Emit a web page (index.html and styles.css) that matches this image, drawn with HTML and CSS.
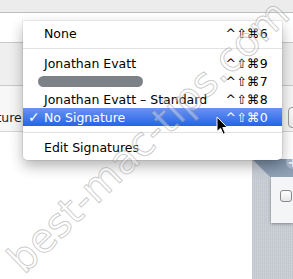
FILE: index.html
```html
<!doctype html>
<html>
  <head>
    <title>Signature menu</title>
    <link rel="stylesheet" href="styles.css">
  </head>
  <body>
    <div class="window">
      <div class="titlebar"></div>
      <div class="toolbar"></div>
      <div class="band"></div>
      <div class="form-row">
        <div class="field">
          <div class="field-label"><span>Signature:</span></div>
          <div class="field-spacer"></div>
          <div class="field-button"></div>
        </div>
      </div>
      <div class="lower">
        <div class="lower-main"></div>
        <div class="panel">
          <div class="panel-head">
            <span class="panel-add">+</span>
          </div>
          <div class="panel-body">
            <div class="card">
              <span class="checkbox"></span>
            </div>
          </div>
        </div>
      </div>
    </div>

    <div class="menu">
      <div class="item">
        <span class="check"></span>
        <span class="label">None</span>
        <span class="key">^⇧⌘6</span>
      </div>
      <div class="sep"></div>
      <div class="item">
        <span class="check"></span>
        <span class="label">Jonathan Evatt</span>
        <span class="key">^⇧⌘9</span>
      </div>
      <div class="item">
        <span class="check"></span>
        <span class="label"><span class="blurred"></span></span>
        <span class="key">^⇧⌘7</span>
      </div>
      <div class="item">
        <span class="check"></span>
        <span class="label">Jonathan Evatt – Standard</span>
        <span class="key">^⇧⌘8</span>
      </div>
      <div class="item selected">
        <span class="check">✓</span>
        <span class="label">No Signature</span>
        <span class="key">^⇧⌘0</span>
      </div>
      <div class="sep"></div>
      <div class="item">
        <span class="check"></span>
        <span class="label">Edit Signatures</span>
        <span class="key"></span>
      </div>
    </div>

    <svg class="pointer" width="13" height="20" viewBox="0 0 13 20">
      <path d="M1 1 L1 15.5 L4.5 12.3 L7.2 18.2 L9.4 17.2 L6.8 11.5 L11.3 11.5 Z"
            fill="#000" stroke="#fff" stroke-width="1" stroke-linejoin="round"/>
    </svg>

    <div class="watermark">best-mac-tips.com</div>
  </body>
</html>
```

FILE: styles.css
```css
* {
  margin: 0;
  padding: 0;
  box-sizing: border-box;
}

body {
  width: 293px;
  height: 279px;
  overflow: hidden;
  position: relative;
  background: #fff;
  font-family: "DejaVu Sans", "Liberation Sans", sans-serif;
  font-size: 12.5px;
  color: #000;
}

.window {
  display: flex;
  flex-direction: column;
  height: 100%;
}

.titlebar {
  height: 13px;
  background: #ececec;
  border-bottom: 1px solid #bdbdbd;
}

.toolbar {
  height: 30px;
  background: #fff;
  border-bottom: 1px solid #c8c8c8;
}

.band {
  height: 43px;
  background: #efefef;
  border-bottom: 1px solid #cacaca;
}

.form-row {
  height: 46px;
  background: #f7f7f7;
  border-bottom: 1px solid #d6d6d6;
  padding-top: 21px;
}

.field {
  display: flex;
  align-items: center;
  height: 21px;
}

.field-label {
  width: 26px;
  display: flex;
  justify-content: flex-end;
  overflow: hidden;
  white-space: nowrap;
  color: #222;
}

.field-spacer {
  flex: 1;
}

.field-button {
  width: 20px;
  height: 21px;
  margin-right: -15px;
  border: 1px solid #9a9a9a;
  border-radius: 4px;
  background: linear-gradient(#fff, #ececec);
}

.lower {
  flex: 1;
  display: flex;
}

.lower-main {
  flex: 1;
  background: #fff;
}

.panel {
  width: 41px;
  margin-top: 27px;
  display: flex;
  flex-direction: column;
  background: #c8ced7;
}

.panel-head {
  height: 18px;
  background: linear-gradient(#7e91aa, #93a3b7);
  clip-path: polygon(0 0, 100% 0, 100% 100%, 18px 100%);
  display: flex;
  justify-content: flex-end;
  align-items: flex-start;
}

.panel-add {
  width: 14px;
  height: 14px;
  margin-right: -7px;
  margin-top: -4px;
  border-radius: 50%;
  background: #a7b4c5;
  color: #e9eef4;
  font-size: 14px;
  font-weight: bold;
  line-height: 14px;
  text-align: center;
}

.panel-body {
  flex: 1;
  background:
    repeating-linear-gradient(0deg, rgba(255,255,255,0.08) 0 1px, transparent 1px 2px),
    repeating-linear-gradient(90deg, rgba(0,0,0,0.04) 0 1px, transparent 1px 2px),
    #c9ced6;
  padding-left: 19px;
}

.card {
  height: 46px;
  background: #f4f5f7;
  box-shadow: 0 1px 3px rgba(0, 0, 0, 0.35);
  padding: 13px 0 0 9px;
}

.checkbox {
  display: block;
  width: 12px;
  height: 12px;
  border: 1px solid #8a8a8a;
  border-radius: 3px;
  background: linear-gradient(#fff, #e6e6e6);
}

/* popup menu */

.menu {
  position: absolute;
  left: 23px;
  top: 21px;
  width: 259px;
  padding: 3px 0 4px;
  background: rgba(255, 255, 255, 0.97);
  border-radius: 0 0 5px 5px;
  box-shadow: 0 6px 14px rgba(0, 0, 0, 0.3), 0 0 0 1px rgba(0, 0, 0, 0.06);
}

.item {
  display: flex;
  align-items: center;
  height: 18px;
  padding-right: 14px;
  white-space: nowrap;
}

.check {
  width: 21px;
  padding-left: 5px;
  flex-shrink: 0;
  font-size: 14px;
  font-weight: bold;
}

.label {
  flex: 1;
}

.key {
  letter-spacing: 0.3px;
}

.selected {
  background: linear-gradient(#6794f2, #2862e8);
  color: #fff;
}

.sep {
  height: 1px;
  margin: 6px 0 5px;
  background: #e2e2e2;
}

.blurred {
  display: block;
  width: 105px;
  height: 11px;
  margin-left: -6px;
  border-radius: 6px;
  background: #7d8188;
  filter: blur(0.6px);
}

.pointer {
  position: absolute;
  left: 216px;
  top: 116px;
}

.watermark {
  position: absolute;
  left: 148px;
  top: 136px;
  transform: translate(-50%, -50%) rotate(-44deg);
  font-family: "DejaVu Sans", sans-serif;
  font-size: 40px;
  white-space: nowrap;
  color: rgba(255, 255, 255, 0.35);
  -webkit-text-stroke: 1px rgba(130, 130, 130, 0.42);
  pointer-events: none;
}
```
